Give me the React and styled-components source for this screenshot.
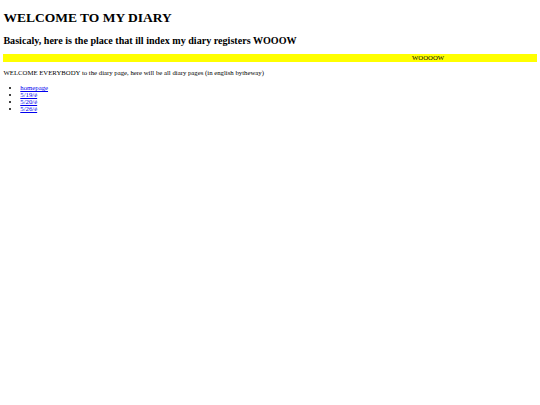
import styled, { createGlobalStyle } from "styled-components";

// the whole page is drawn at 0.42 of the browser defaults
const GlobalStyle = createGlobalStyle`
    body {
        margin: 3.4px;
        background: #fff;
        color: #000;
        font-family: "Liberation Serif", "Times New Roman", serif;
        font-size: 6.75px;
    }
`

const diaryPages = [
    { label: "homepage", href: "#" },
    { label: "5/19/é", href: "#" },
    { label: "5/20/é", href: "#" },
    { label: "5/26/é", href: "#" },
]

const App = () => {
    return (
        <>
            <GlobalStyle />
            <Title>WELCOME TO MY DIARY</Title>
            <SubTitle>Basicaly, here is the place that ill index my diary registers WOOOW</SubTitle>
            <Banner>
                <BannerText>WOOOOW</BannerText>
            </Banner>
            <Intro>
                WELCOME EVERYBODY to the diary page, here will be all diary pages (in english bytheway)
            </Intro>
            <PageList>
                {diaryPages.map((page) => (
                    <PageItem key={page.label}>
                        <PageLink href={page.href}>{page.label}</PageLink>
                    </PageItem>
                ))}
            </PageList>
        </>
    );
}

export default App;


const Title = styled.h1`
    font-size: 13.5px;
    font-weight: bold;
    margin: 7px 0 9px;
`

const SubTitle = styled.h2`
    font-size: 10.1px;
    font-weight: bold;
    margin: 8.4px 0 7.4px;
`

const Banner = styled.div`
    background: #ffff00;
    height: 7.8px;
    line-height: 7.8px;
    overflow: hidden;
    white-space: nowrap;
`

const BannerText = styled.span`
    display: inline-block;
    margin-left: 408.5px;
`

const Intro = styled.p`
    margin: 7.75px 0 6.75px;
`

const PageList = styled.ul`
    margin: 7.75px 0 6.75px;
    padding-left: 16.9px;
`

const PageItem = styled.li``

const PageLink = styled.a`
    color: #0000ee;
    text-decoration: underline;
`
